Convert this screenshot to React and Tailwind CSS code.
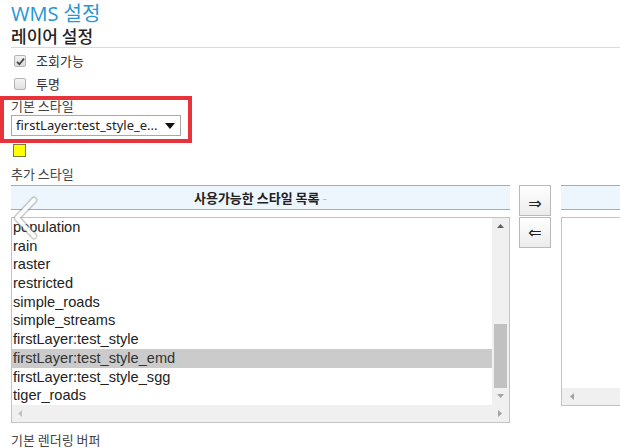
export default function App() {
  const items = [
    "population",
    "rain",
    "raster",
    "restricted",
    "simple_roads",
    "simple_streams",
    "firstLayer:test_style",
    "firstLayer:test_style_emd",
    "firstLayer:test_style_sgg",
    "tiger_roads",
  ];
  const ko = { fontFamily: '"Noto Sans CJK KR", "Noto Sans", sans-serif' };

  return (
    <div className="relative w-[620px] h-[448px] overflow-hidden bg-white pl-[11px] text-[#333]" style={ko}>
      {/* Titles */}
      <div className="h-[26px] pt-[4px] text-[20px] leading-[20px] text-[#2596d6]" style={{ fontFamily: '"Open Sans", "Noto Sans CJK KR", sans-serif' }}>
        WMS 설정
      </div>
      <div className="h-[21px] pt-[1px] text-[17px] leading-[18px] font-medium text-[#222]">레이어 설정</div>
      <div className="h-px bg-[#d3e2bf]"></div>

      {/* Checkboxes */}
      <div className="mt-[7px] flex flex-col gap-[11px]">
        <label className="flex items-center h-[12px] text-[13px] text-[#333]">
          <span className="ml-[3px] w-[12px] h-[12px] rounded-[2px] border border-[#b5b5b5] bg-gradient-to-b from-[#f2f2f2] to-[#dcdcdc] flex items-center justify-center">
            <svg width="9" height="9" viewBox="0 0 9 9"><path d="M1 4.8 L3.4 7.2 L8 1.6" stroke="#444" strokeWidth="1.8" fill="none" /></svg>
          </span>
          <span className="ml-[10px]">조회가능</span>
        </label>
        <label className="flex items-center h-[12px] text-[13px] text-[#333]">
          <span className="ml-[3px] w-[12px] h-[12px] rounded-[2px] border border-[#b5b5b5] bg-gradient-to-b from-[#f4f4f4] to-[#e0e0e0]"></span>
          <span className="ml-[10px]">투명</span>
        </label>
      </div>

      {/* Base style */}
      <div className="mt-[6px] h-[19px] text-[13px] leading-[19px] text-[#444]">기본 스타일</div>
      <div className="w-[170px] h-[21px] border border-[#a9a9a9] bg-white flex items-center justify-between px-[4px] text-[13px] text-[#222]" style={{ fontFamily: '"Noto Sans", "Liberation Sans", sans-serif' }}>
        <span className="truncate">firstLayer:test_style_e...</span>
        <svg width="10" height="6" viewBox="0 0 10 6" className="mr-[1px]"><path d="M0 0 H10 L5 6 Z" fill="#111" /></svg>
      </div>
      <div className="mt-[8px] ml-[2px] w-[13px] h-[13px] bg-[#ffff00] border border-[#7a7a3a]"></div>

      {/* Additional style */}
      <div className="mt-[7px] h-[20px] text-[13px] leading-[20px] text-[#444]">추가 스타일</div>

      <div className="mt-[1px] flex items-start">
        {/* Left list */}
        <div className="w-[499px] flex flex-col">
          <div className="h-[25px] bg-[#eef6fd] border-y border-[#8eafd2] flex items-center justify-center text-[13px] font-bold text-[#222]">
            사용가능한 스타일 목록 <span className="ml-[3px] text-[#bbb] font-normal">-</span>
          </div>
          <div className="mt-[7px] h-[206px] border border-[#c3c3c3] flex flex-col">
            <div className="flex flex-1 min-h-0">
              <div className="flex-1 overflow-hidden text-[14.6px] leading-[18.7px] text-[#222]" style={{ fontFamily: '"Liberation Sans", Arial, sans-serif' }}>
                {items.map((it) => (
                  <div key={it} className={`h-[18.7px] pl-[1px] ${it === "firstLayer:test_style_emd" ? "bg-[#cbcbcb] text-[#333]" : ""}`}>{it}</div>
                ))}
              </div>
              <div className="w-[17px] bg-[#f0f0f0] flex flex-col items-center">
                <svg width="7" height="4" viewBox="0 0 7 4" className="mt-[6px]"><path d="M0 4 L3.5 0 L7 4 Z" fill="#606060" /></svg>
                <div className="mt-[96px] w-[13px] h-[64px] bg-[#c1c1c1]"></div>
                <svg width="7" height="4" viewBox="0 0 7 4" className="mt-[6px]"><path d="M0 0 L7 0 L3.5 4 Z" fill="#a3a3a3" /></svg>
              </div>
            </div>
            <div className="h-[17px] bg-[#f0f0f0] flex items-center justify-between px-[6px]">
              <svg width="4" height="7" viewBox="0 0 4 7"><path d="M4 0 L4 7 L0 3.5 Z" fill="#c4c4c4" /></svg>
              <svg width="4" height="7" viewBox="0 0 4 7" className="mr-[1px]"><path d="M0 0 L0 7 L4 3.5 Z" fill="#a3a3a3" /></svg>
            </div>
          </div>
        </div>

        {/* Move buttons */}
        <div className="ml-[9px] flex flex-col gap-[1px]">
          <button className="w-[32px] h-[31px] border border-[#b9b9b9] bg-gradient-to-b from-white to-[#ececec] text-[16px] leading-none text-[#222] flex items-center justify-center pt-[6px]" style={{ fontFamily: '"DejaVu Sans", sans-serif' }}>⇒</button>
          <button className="w-[32px] h-[31px] border border-[#b9b9b9] bg-gradient-to-b from-white to-[#ececec] text-[16px] leading-none text-[#222] flex items-center justify-center" style={{ fontFamily: '"DejaVu Sans", sans-serif' }}>⇐</button>
        </div>

        {/* Right list */}
        <div className="ml-[10px] flex-1 flex flex-col">
          <div className="h-[25px] bg-[#eef6fd] border-y border-[#8eafd2]"></div>
          <div className="mt-[7px] h-[189px] border-l border-t border-b border-[#c3c3c3] flex flex-col">
            <div className="flex-1"></div>
            <div className="h-[17px] bg-[#f0f0f0] flex items-center px-[8px]">
              <svg width="4" height="7" viewBox="0 0 4 7"><path d="M4 0 L4 7 L0 3.5 Z" fill="#a3a3a3" /></svg>
            </div>
          </div>
        </div>
      </div>

      <div className="mt-[7px] h-[20px] text-[13px] leading-[20px] text-[#444]">기본 렌더링 버퍼</div>

      {/* Red highlight annotation */}
      <div className="absolute left-0 top-[96px] w-[192px] h-[47px] border-[4px] border-[#e8333b] pointer-events-none"></div>

      {/* Carousel prev chevron overlay */}
      <svg className="absolute left-[10px] top-[196px] pointer-events-none" width="30" height="44" viewBox="0 0 30 44">
        <path d="M24 4 L7 22 L24 40" stroke="rgba(120,120,120,0.35)" strokeWidth="7" fill="none" strokeLinecap="round" strokeLinejoin="round" />
        <path d="M24 4 L7 22 L24 40" stroke="rgba(255,255,255,0.95)" strokeWidth="4" fill="none" strokeLinecap="round" strokeLinejoin="round" />
      </svg>
    </div>
  );
}
